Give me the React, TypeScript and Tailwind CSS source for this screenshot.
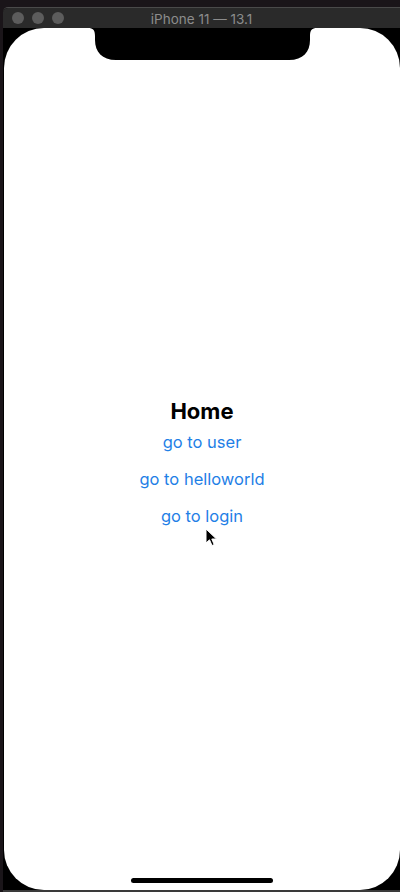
import React from "react";

const links = ["go to user", "go to helloworld", "go to login"];

const Notch = () => (
  <svg
    className="absolute left-[84px] top-0"
    width="229"
    height="33"
    viewBox="0 0 229 33"
  >
    <path
      d="M0 0 H229 C224 0 222 2 222 8 V12 C222 24 215 32 201 32 H28 C14 32 7 24 7 12 V8 C7 2 5 0 0 0 Z"
      fill="#000"
    />
  </svg>
);

const Cursor = () => (
  <svg
    className="absolute left-[201px] top-[500px]"
    width="14"
    height="20"
    viewBox="0 0 14 20"
  >
    <path
      d="M1 1 L1 15 L4.5 11.8 L7 17.5 L9.2 16.6 L6.8 11 L11.5 11 Z"
      fill="#000"
      stroke="#fff"
      strokeWidth="1"
      strokeLinejoin="round"
    />
  </svg>
);

export default function App() {
  return (
    <div className="h-[892px] w-[400px] overflow-hidden bg-[#1a1519] pl-[3px] pt-[7px]">
      <div className="flex h-[885px] flex-col overflow-hidden rounded-tl-[5px] border-t border-[#4a4a4a] bg-black">
        <div className="relative flex h-[20px] items-center bg-[#2a2a2a]">
          <div className="flex gap-[8px] pl-[9px]">
            <span className="h-[12px] w-[12px] rounded-full bg-[#5c5c5c]" />
            <span className="h-[12px] w-[12px] rounded-full bg-[#5c5c5c]" />
            <span className="h-[12px] w-[12px] rounded-full bg-[#5c5c5c]" />
          </div>
          <span className="absolute left-0 right-0 top-[1px] text-center font-['Inter',sans-serif] text-[13.5px] text-[#8c8c8c]">
            iPhone 11 — 13.1
          </span>
        </div>
        <div className="flex flex-1 flex-col bg-black pl-px">
          <div className="relative flex flex-1 flex-col items-center justify-center rounded-[40px] bg-white pt-[9px] font-['Inter',sans-serif]">
            <Notch />
            <h1 className="mb-[6px] text-[22px] font-bold leading-[26px] text-black">
              Home
            </h1>
            <div className="flex flex-col items-center gap-[12px]">
              {links.map((l) => (
                <span
                  key={l}
                  className="text-[16.5px] leading-[25px] text-[#1f80e6]"
                >
                  {l}
                </span>
              ))}
            </div>
            <Cursor />
            <div className="absolute bottom-[7px] left-[127px] h-[5px] w-[142px] rounded-full bg-black" />
          </div>
        </div>
        <div className="h-[2px] bg-[#3a3a3a]" />
      </div>
    </div>
  );
}
